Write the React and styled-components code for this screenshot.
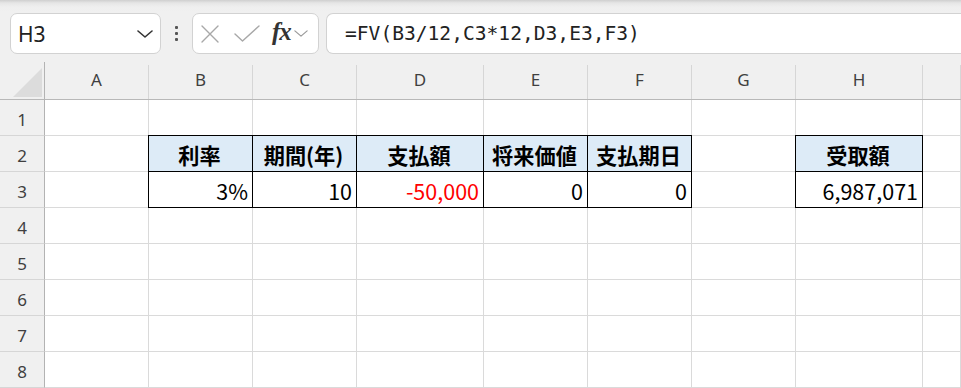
import React from "react";
import styled, { createGlobalStyle } from "styled-components";

const Global = createGlobalStyle`
  html, body { margin: 0; padding: 0; background: #ffffff; overflow: hidden; }
  * { box-sizing: border-box; }
`;

const Page = styled.div`
  width: 961px;
  height: 388px;
  overflow: hidden;
  background: #fff;
`;

const Toolbar = styled.div`
  height: 62px;
  display: flex;
  align-items: flex-start;
  padding: 13px 0 0 10px;
  background: linear-gradient(#cfcfcf 0px, #e6e6e6 3px, #efefef 7px, #f0f0f0 12px);
`;

const Box = styled.div`
  height: 41px;
  background: #fff;
  border: 1px solid #d2d2d2;
  border-radius: 7px;
  display: flex;
  align-items: center;
`;

const NameBox = styled(Box)`
  width: 151px;
  padding: 0 7px 0 7px;
  justify-content: space-between;
  font-family: "Noto Sans", "Open Sans", sans-serif;
  font-size: 21px;
  color: #222;
`;

const Dots = styled.div`
  width: 31px;
  height: 41px;
  display: flex;
  flex-direction: column;
  align-items: center;
  justify-content: center;
  gap: 3px;
  & > span {
    width: 3px;
    height: 3px;
    background: #555;
    border-radius: 1px;
  }
`;

const FxBox = styled(Box)`
  width: 127px;
  padding: 0 0 0 8px;
  gap: 0;
`;

const Fx = styled.span`
  font-family: "Liberation Serif", "DejaVu Serif", serif;
  font-style: italic;
  font-weight: 700;
  font-size: 25px;
  color: #333;
  margin: -3px 3px 0 12px;
  letter-spacing: -1px;
`;

const FormulaBox = styled(Box)`
  flex: 1;
  margin-left: 7px;
  border-right: none;
  border-radius: 7px 0 0 7px;
  padding-left: 18px;
  font-family: "DejaVu Sans Mono", "Liberation Mono", monospace;
  font-size: 19.6px;
  color: #222;
`;

const Sheet = styled.div`
  display: grid;
  grid-template-columns: 45px 104px 104px 104px 127px 104px 104px 104px 127px 1fr;
  grid-template-rows: 38px repeat(8, 36px);
`;

const Corner = styled.div`
  background: #f0f0f0;
  border-right: 1px solid #b3b3b3;
  border-bottom: 1px solid #b8b8b8;
  padding: 6px 0 0 13px;
`;

const ColHead = styled.div`
  background: linear-gradient(#d6d6d6, #d6d6d6) right 3px / 1px calc(100% - 3px) no-repeat, #f0f0f0;
  border-bottom: 1px solid #b8b8b8;
  display: flex;
  align-items: center;
  justify-content: center;
  padding: 0 1px 3px 0;
  font-family: "Noto Sans", "Open Sans", sans-serif;
  font-size: 17px;
  color: #3f3f3f;
`;

const RowHead = styled.div`
  background: #f0f0f0;
  border-right: 1px solid #b3b3b3;
  border-bottom: 1px solid #d6d6d6;
  display: flex;
  align-items: center;
  justify-content: center;
  padding-top: 3px;
  font-family: "Noto Sans", "Open Sans", sans-serif;
  font-size: 17px;
  color: #3f3f3f;
`;

const Cell = styled.div`
  border-right: 1px solid ${(p) => (p.$boxed ? "#000" : "#dadada")};
  border-bottom: 1px solid ${(p) => (p.$boxed ? "#000" : "#dadada")};
  background: ${(p) => (p.$head ? "#ddebf7" : "#fff")};
  box-shadow: ${(p) => (p.$boxed ? "-1px 0 0 #000, 0 -1px 0 #000, -1px -1px 0 #000" : "none")};
  display: flex;
  align-items: center;
  justify-content: ${(p) => (p.$head ? "center" : "flex-end")};
  padding: 1px 4px 0 2px;
  font-family: "Noto Sans CJK JP", "Noto Sans", sans-serif;
  font-size: ${(p) => (p.$head ? "21.2px" : "21.5px")};
  font-weight: ${(p) => (p.$head ? 700 : 400)};
  color: ${(p) => (p.$red ? "#ff0000" : "#000")};
  white-space: nowrap;
  overflow: visible;
`;

const cols = ["A", "B", "C", "D", "E", "F", "G", "H", ""];

const data = {
  2: { B: { t: "利率", head: true }, C: { t: "期間(年)", head: true }, D: { t: "支払額", head: true }, E: { t: "将来価値", head: true }, F: { t: "支払期日", head: true }, H: { t: "受取額", head: true } },
  3: { B: { t: "3%" }, C: { t: "10" }, D: { t: "-50,000", red: true }, E: { t: "0" }, F: { t: "0" }, H: { t: "6,987,071" } },
};

function ChevronDown({ size = 16, color = "#333", width = 1.6 }) {
  return (
    <svg width={size} height={size * 0.5} viewBox="0 0 16 8" fill="none">
      <path d="M1 1 L8 7 L15 1" stroke={color} strokeWidth={width} strokeLinecap="round" strokeLinejoin="round" />
    </svg>
  );
}

export default function App() {
  return (
    <Page>
      <Global />
      <Toolbar>
        <NameBox>
          <span>H3</span>
          <ChevronDown />
        </NameBox>
        <Dots>
          <span />
          <span />
          <span />
        </Dots>
        <FxBox>
          <svg width="18" height="18" viewBox="0 0 18 18" fill="none">
            <path d="M1 1 L17 17 M17 1 L1 17" stroke="#a8a8a8" strokeWidth="1.4" strokeLinecap="round" />
          </svg>
          <svg width="26" height="18" viewBox="0 0 26 18" fill="none" style={{ marginLeft: 15 }}>
            <path d="M1 9 L8.5 16 L25 1" stroke="#a8a8a8" strokeWidth="1.4" strokeLinecap="round" strokeLinejoin="round" />
          </svg>
          <Fx>fx</Fx>
          <ChevronDown size={14} color="#9a9a9a" width={1.4} />
        </FxBox>
        <FormulaBox>=FV(B3/12,C3*12,D3,E3,F3)</FormulaBox>
      </Toolbar>
      <Sheet>
        <Corner>
          <svg width="29" height="29" viewBox="0 0 29 29">
            <polygon points="29,0 29,29 0,29" fill="#dcdcdc" />
          </svg>
        </Corner>
        {cols.map((c, i) => (
          <ColHead key={"h" + i}>{c}</ColHead>
        ))}
        {[1, 2, 3, 4, 5, 6, 7, 8].map((r) => (
          <React.Fragment key={r}>
            <RowHead>{r}</RowHead>
            {cols.map((c, i) => {
              const d = (data[r] && data[r][c]) || null;
              return (
                <Cell key={r + "-" + i} $boxed={!!d} $head={d && d.head} $red={d && d.red}>
                  {d ? d.t : ""}
                </Cell>
              );
            })}
          </React.Fragment>
        ))}
      </Sheet>
    </Page>
  );
}
